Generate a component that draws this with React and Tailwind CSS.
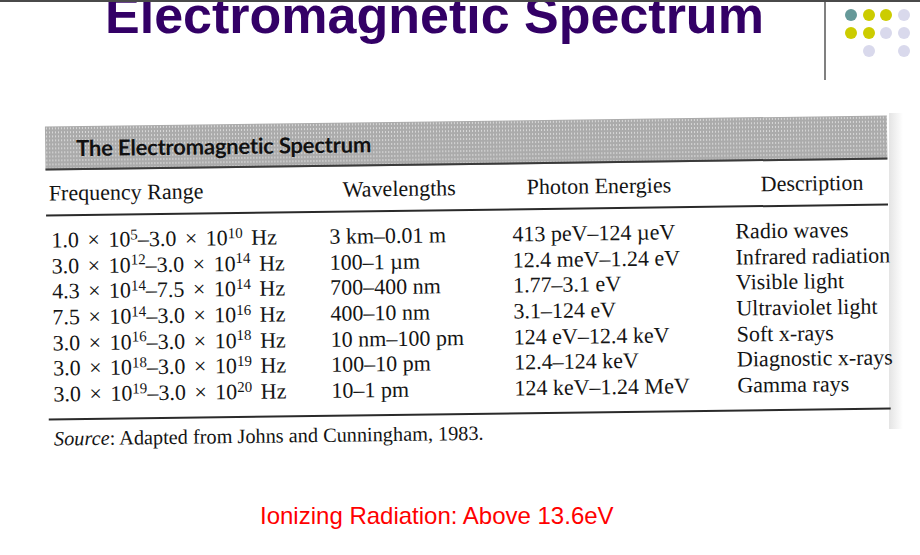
const DOT_COLORS = {
  teal: 'bg-[#669999]',
  yellow: 'bg-[#cccc00]',
  lav: 'bg-[#d9d9ec]'
};

const DOTS = [
  ['teal', 'yellow', 'yellow', 'lav'],
  ['yellow', 'yellow', 'lav', 'lav'],
  [null, 'lav', null, 'lav']
];

const ROWS = [
  [['1.0', '5'], ['3.0', '10'], '3 km–0.01 m', '413 peV–124 µeV', 'Radio waves'],
  [['3.0', '12'], ['3.0', '14'], '100–1 µm', '12.4 meV–1.24 eV', 'Infrared radiation'],
  [['4.3', '14'], ['7.5', '14'], '700–400 nm', '1.77–3.1 eV', 'Visible light'],
  [['7.5', '14'], ['3.0', '16'], '400–10 nm', '3.1–124 eV', 'Ultraviolet light'],
  [['3.0', '16'], ['3.0', '18'], '10 nm–100 pm', '124 eV–12.4 keV', 'Soft x-rays'],
  [['3.0', '18'], ['3.0', '19'], '100–10 pm', '12.4–124 keV', 'Diagnostic x-rays'],
  [['3.0', '19'], ['3.0', '20'], '10–1 pm', '124 keV–1.24 MeV', 'Gamma rays']
];

function Power({ value }) {
  return (
    <>
      {value[0]} × 10<sup className="text-[15px]">{value[1]}</sup>
    </>
  );
}

function Dots() {
  return (
    <div className="ml-[19px] mt-[7px] grid grid-cols-[12px_12px_12px_12px] gap-x-[5.5px] gap-y-[6px] self-start">
      {DOTS.flat().map((c, i) =>
        c ? (
          <span key={i} className={`h-3 w-3 rounded-full ${DOT_COLORS[c]}`} />
        ) : (
          <span key={i} className="h-3 w-3" />
        )
      )}
    </div>
  );
}

function ScanTable() {
  return (
    <div className="ml-[47px] w-[842px] rotate-[-0.75deg] text-[#141414] font-['Liberation_Serif',serif]">
      <div className="flex h-[44px] items-center border-b-2 border-[#3a3a3a] bg-[#ababab] bg-[radial-gradient(circle,#d8d8d8_0.7px,transparent_1.1px)] bg-[length:3px_4px] pl-[31px]">
        <span className="font-['Lato',sans-serif] text-[22px] font-bold tracking-[-0.2px] text-[#111]">
          The Electromagnetic Spectrum
        </span>
      </div>

      <div className="grid h-[44px] grid-cols-[294px_184px_234px_1fr] items-center pl-[3px] text-[22px]">
        <span>Frequency Range</span>
        <span>Wavelengths</span>
        <span>Photon Energies</span>
        <span>Description</span>
      </div>
      <div className="h-[2px] bg-[#2a2a2a]" />

      <div className="pb-[11px] pt-[11px]">
        {ROWS.map((r, i) => (
          <div
            key={i}
            className="grid h-[25.7px] grid-cols-[278px_183px_223px_1fr] items-center pl-[5px] text-[22px] leading-[25.7px]"
          >
            <span className="whitespace-nowrap [word-spacing:3px]">
              <Power value={r[0]} />–<Power value={r[1]} /> Hz
            </span>
            <span className="whitespace-nowrap">{r[2]}</span>
            <span className="whitespace-nowrap">{r[3]}</span>
            <span className="whitespace-nowrap">{r[4]}</span>
          </div>
        ))}
      </div>
      <div className="h-[2px] bg-[#2a2a2a]" />

      <div className="pl-[5px] pt-[6px] text-[20.3px] leading-[24px]">
        <i>Source</i>: Adapted from Johns and Cunningham, 1983.
      </div>
    </div>
  );
}

export default function App() {
  return (
    <div className="relative h-[555px] w-[920px] overflow-hidden border-t-2 border-[#4a4a4a] bg-white">
      <div className="flex h-[78px]">
        <div className="w-[824px] overflow-hidden">
          <h1 className="mt-[-13px] whitespace-nowrap pl-[105px] font-['Liberation_Sans',Arial,sans-serif] text-[52px] font-bold leading-none text-[#330066]">
            Electromagnetic Spectrum
          </h1>
        </div>
        <div className="h-[78px] w-[2px] bg-[#808080]" />
        <Dots />
      </div>

      <div className="mt-[41px] flex items-start">
        <ScanTable />
        <div className="mt-[-8px] h-[316px] w-[14px] bg-linear-to-r from-[#e4e4e4] to-white" />
      </div>

      <p className="mt-[58px] pl-[260px] font-['Liberation_Sans',Arial,sans-serif] text-[24px] leading-[26px] text-[#ff0000]">
        Ionizing Radiation: Above 13.6eV
      </p>
    </div>
  );
}
